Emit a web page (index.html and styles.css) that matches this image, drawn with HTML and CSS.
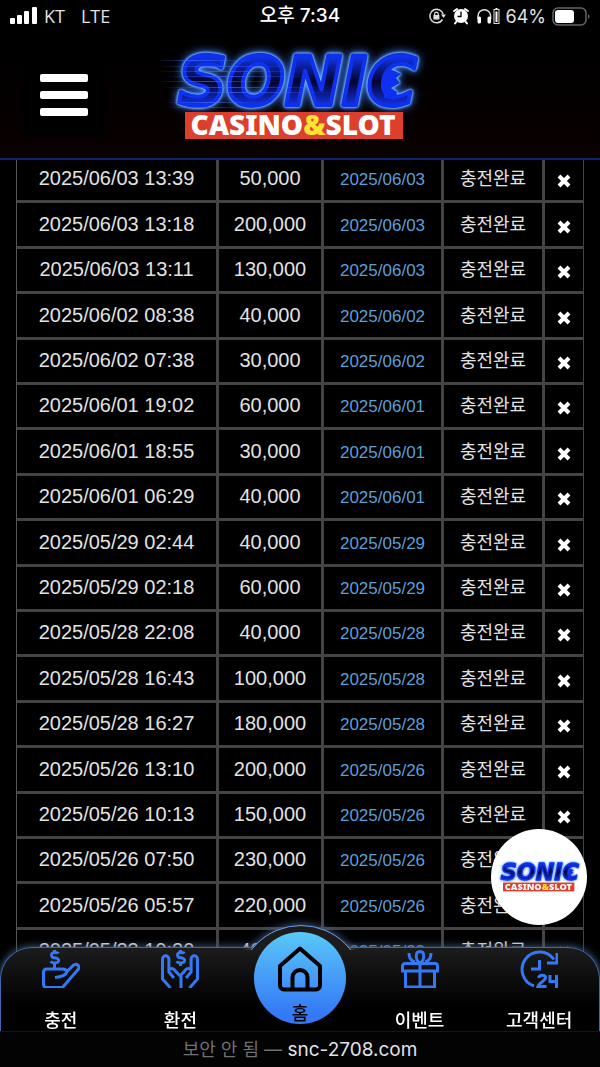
FILE: index.html
```html
<!DOCTYPE html>
<html lang="ko">
<head>
  <meta charset="UTF-8" />
  <meta name="viewport" content="width=device-width, initial-scale=1.0"/>
  <title>SONIC CASINO&amp;SLOT</title>
  <link rel="stylesheet" href="styles.css">
</head>
<body>

<!-- Shared shapes -->
<svg class="sprite" aria-hidden="true">
  <defs>
    <linearGradient id="letter-fill" x1="0" y1="0" x2="0" y2="1">
      <stop offset="0.15" stop-color="#1238ff"/>
      <stop offset="0.5" stop-color="#04042c"/>
      <stop offset="0.85" stop-color="#1238ff"/>
    </linearGradient>
    <linearGradient id="speed" x1="0" x2="1">
      <stop offset="0" stop-color="#3a68ff" stop-opacity="0"/>
      <stop offset="0.4" stop-color="#3a68ff" stop-opacity="0.7"/>
      <stop offset="1" stop-color="#3a68ff" stop-opacity="0"/>
    </linearGradient>
  </defs>
  <symbol id="icon-x" viewBox="0 0 14 14">
    <path d="M2 2l10 10M12 2L2 12" fill="none" stroke="currentColor" stroke-width="4"/>
  </symbol>
  <symbol id="speed-lines" viewBox="0 0 290 110">
    <g fill="url(#speed)">
      <rect x="6" y="20" width="100" height="1"/>
      <rect x="10" y="26" width="130" height="1"/>
      <rect x="6" y="31" width="150" height="1"/>
      <rect x="12" y="36" width="150" height="1"/>
      <rect x="6" y="41" width="130" height="1"/>
      <rect x="14" y="47" width="160" height="1"/>
      <rect x="20" y="52" width="170" height="1"/>
      <rect x="15" y="62" width="100" height="1"/>
      <rect x="17" y="67" width="80" height="1"/>
    </g>
  </symbol>
</svg>

<header class="top">
  <!-- Phone status bar -->
  <div class="status">
    <div class="status-left">
      <svg width="28" height="18" viewBox="0 0 28 18" fill="#fff">
        <rect x="0" y="11" width="5" height="6" rx="1"/>
        <rect x="7" y="8" width="5" height="9" rx="1"/>
        <rect x="14" y="4" width="5" height="13" rx="1"/>
        <rect x="22" y="0" width="5" height="17" rx="1"/>
      </svg>
      <span>KT</span>
      <span class="network">LTE</span>
    </div>
    <div class="clock">오후 7:34</div>
    <div class="status-right">
      <svg width="18" height="18" viewBox="0 0 18 18" fill="none" stroke="#ddd" stroke-width="1.5">
        <path d="M14.5 12.5A6.8 6.8 0 1 1 15.3 7.5"/>
        <path d="M13 7.5h5l-2.5 3.5z" fill="#ddd" stroke="none"/>
        <rect x="5.4" y="8" width="6" height="4.5" fill="#ddd" stroke="none"/>
        <path d="M6.6 8.5V7a1.8 1.8 0 0 1 3.6 0v1.5" stroke-width="1.2"/>
      </svg>
      <svg width="18" height="18" viewBox="0 0 18 18">
        <circle cx="9" cy="9" r="7" fill="#fff"/>
        <path d="M2 4L5 2M16 4L13 2M4.500 14.500L3 16.500M13.500 14.500L15 16.500" stroke="#fff" stroke-width="2" stroke-linecap="round"/>
        <path d="M9 4.500V9.500H5.500" fill="none" stroke="#000" stroke-width="1.3"/>
      </svg>
      <svg width="24" height="18" viewBox="0 0 24 18">
        <path d="M2 12V9a6.300 6.300 0 0 1 12.600 0v3" fill="none" stroke="#ddd" stroke-width="1.5"/>
        <rect x="1.5" y="9.5" width="3.5" height="7" rx="1.5" fill="#fff"/>
        <rect x="11.5" y="9.5" width="3.5" height="7" rx="1.5" fill="#fff"/>
        <rect x="18" y="2.5" width="5" height="14" fill="none" stroke="#ddd"/>
        <path d="M19.500 4.500h2v10.500h-2zM19.500 1h2v1h-2z" fill="#fff"/>
      </svg>
      <span>64%</span>
      <svg class="battery" width="38" height="19" viewBox="0 0 38 19">
        <rect x="1" y="1" width="33" height="17" rx="5" fill="none" stroke="#666" stroke-width="1.5"/>
        <rect x="3" y="3" width="19" height="13" rx="3" fill="#fff"/>
        <path d="M36 7c2 1 2 4 0 5z" fill="#666"/>
      </svg>
    </div>
  </div>

  <!-- Site header -->
  <div class="site-header">
    <button class="menu-toggle" aria-label="메뉴"><i></i><i></i><i></i></button>
    <a class="brand" href="#">
      <svg class="logo" viewBox="0 0 290 110">
        <g class="logo-name">
          <text x="28" y="65">SONIC</text>
          <path d="M240 29L251 34L246 38L250 43L241 48L247 52L246 60L234 58L234 36z"/>
        </g>
        <use href="#speed-lines" width="290" height="110"/>
        <rect x="35" y="72" width="218" height="27" fill="#dc3f2b"/>
        <text class="logo-sub" x="143" y="95">CASINO<tspan fill="#ffe234">&amp;</tspan>SLOT</text>
      </svg>
    </a>
  </div>
</header>

<main>
  <table class="history">
    <colgroup><col><col class="c-amount"><col class="c-date"><col class="c-state"><col class="c-del"></colgroup>
    <tbody>
      <tr><td>2025/06/03 13:39</td><td>50,000</td><td>2025/06/03</td><td>충전완료</td><td><button aria-label="삭제"><svg><use href="#icon-x"/></svg></button></td></tr>
      <tr><td>2025/06/03 13:18</td><td>200,000</td><td>2025/06/03</td><td>충전완료</td><td><button aria-label="삭제"><svg><use href="#icon-x"/></svg></button></td></tr>
      <tr><td>2025/06/03 13:11</td><td>130,000</td><td>2025/06/03</td><td>충전완료</td><td><button aria-label="삭제"><svg><use href="#icon-x"/></svg></button></td></tr>
      <tr><td>2025/06/02 08:38</td><td>40,000</td><td>2025/06/02</td><td>충전완료</td><td><button aria-label="삭제"><svg><use href="#icon-x"/></svg></button></td></tr>
      <tr><td>2025/06/02 07:38</td><td>30,000</td><td>2025/06/02</td><td>충전완료</td><td><button aria-label="삭제"><svg><use href="#icon-x"/></svg></button></td></tr>
      <tr><td>2025/06/01 19:02</td><td>60,000</td><td>2025/06/01</td><td>충전완료</td><td><button aria-label="삭제"><svg><use href="#icon-x"/></svg></button></td></tr>
      <tr><td>2025/06/01 18:55</td><td>30,000</td><td>2025/06/01</td><td>충전완료</td><td><button aria-label="삭제"><svg><use href="#icon-x"/></svg></button></td></tr>
      <tr><td>2025/06/01 06:29</td><td>40,000</td><td>2025/06/01</td><td>충전완료</td><td><button aria-label="삭제"><svg><use href="#icon-x"/></svg></button></td></tr>
      <tr><td>2025/05/29 02:44</td><td>40,000</td><td>2025/05/29</td><td>충전완료</td><td><button aria-label="삭제"><svg><use href="#icon-x"/></svg></button></td></tr>
      <tr><td>2025/05/29 02:18</td><td>60,000</td><td>2025/05/29</td><td>충전완료</td><td><button aria-label="삭제"><svg><use href="#icon-x"/></svg></button></td></tr>
      <tr><td>2025/05/28 22:08</td><td>40,000</td><td>2025/05/28</td><td>충전완료</td><td><button aria-label="삭제"><svg><use href="#icon-x"/></svg></button></td></tr>
      <tr><td>2025/05/28 16:43</td><td>100,000</td><td>2025/05/28</td><td>충전완료</td><td><button aria-label="삭제"><svg><use href="#icon-x"/></svg></button></td></tr>
      <tr><td>2025/05/28 16:27</td><td>180,000</td><td>2025/05/28</td><td>충전완료</td><td><button aria-label="삭제"><svg><use href="#icon-x"/></svg></button></td></tr>
      <tr><td>2025/05/26 13:10</td><td>200,000</td><td>2025/05/26</td><td>충전완료</td><td><button aria-label="삭제"><svg><use href="#icon-x"/></svg></button></td></tr>
      <tr><td>2025/05/26 10:13</td><td>150,000</td><td>2025/05/26</td><td>충전완료</td><td><button aria-label="삭제"><svg><use href="#icon-x"/></svg></button></td></tr>
      <tr><td>2025/05/26 07:50</td><td>230,000</td><td>2025/05/26</td><td>충전완료</td><td><button aria-label="삭제"><svg><use href="#icon-x"/></svg></button></td></tr>
      <tr><td>2025/05/26 05:57</td><td>220,000</td><td>2025/05/26</td><td>충전완료</td><td><button aria-label="삭제"><svg><use href="#icon-x"/></svg></button></td></tr>
      <tr><td>2025/05/23 19:20</td><td>40,000</td><td>2025/05/23</td><td>충전완료</td><td><button aria-label="삭제"><svg><use href="#icon-x"/></svg></button></td></tr>
    </tbody>
  </table>
</main>

<a class="floating" href="#">
  <svg viewBox="0 0 290 110">
    <g class="logo-name">
      <text x="28" y="65">SONIC</text>
      <path d="M240 29L251 34L246 38L250 43L241 48L247 52L246 60L234 58L234 36z"/>
    </g>
    <use href="#speed-lines" width="290" height="110"/>
    <rect x="35" y="72" width="218" height="27" fill="#dc3f2b"/>
    <text class="logo-sub" x="143" y="95">CASINO<tspan fill="#ffe234">&amp;</tspan>SLOT</text>
  </svg>
</a>

<footer class="bottom">
  <nav class="tabs">
    <a href="#">
      <svg viewBox="0 0 38 38">
        <path d="M16.500 3.500c-1-1.500-6.500-1.500-7 1-.5 2 1 3 3.200 3.300 2.600.4 4.600 1.400 3.800 3.500-.9 2.200-6.500 2-8 0M12.500 0v2.500M12.500 13v6"/>
        <path d="M20 19H4.500A3 3 0 0 0 1.500 22v12.500a3 3 0 0 0 3 3H20.500L36 19.500a3 3 0 0 0-4.500-4.300L25 21.500C24 25 20 27 13 27.500M20 19c3.500 0 5 1.500 5 3"/>
      </svg>
      <span>충전</span>
    </a>
    <a href="#">
      <svg viewBox="0 0 38 38">
        <path d="M23.500 3.500c-1-1.500-6.500-1.500-7 1-.5 2 1 3 3.200 3.300 2.600.4 4.600 1.400 3.800 3.500-.9 2.200-6.500 2-8 0M19.500 0v2.500M19.500 13v3"/>
        <path d="M9.500 38L1.500 29V9a3.200 3.200 0 0 1 6.400 0v13l5 6M7.900 20c3-3 5-1 6.500 1l5.600 6M28.500 38l8-9V9a3.200 3.200 0 0 0-6.400 0v13l-5 6M30.100 20c-3-3-5-1-6.500 1L20 25v13"/>
      </svg>
      <span>환전</span>
    </a>
    <a class="home" href="#">
      <svg viewBox="0 0 46 46">
        <path d="M23 2.500L3 20v19.500a4 4 0 0 0 4 4h32a4 4 0 0 0 4-4V20zM15.500 43V31.500a7.500 7.500 0 0 1 15 0V43"/>
      </svg>
      <span>홈</span>
    </a>
    <a href="#">
      <svg viewBox="0 0 38 38">
        <path d="M1.500 21v-5a2.500 2.500 0 0 1 2.500-2.500h30a2.500 2.500 0 0 1 2.500 2.500v5zM4.500 21v16h29V21M19 13.500V37"/>
        <path d="M19 13.500c-5-4-5-12 0-12s5 8 0 12zM8 3c0 5 2 8 6 9M30 3c0 5-2 8-6 9"/>
      </svg>
      <span>이벤트</span>
    </a>
    <a href="#">
      <svg viewBox="0 0 38 38">
        <path d="M14 36A17.500 17.500 0 1 1 34 9.500M37 3v10H27M19.500 10v9H11"/>
        <path d="M18.500 28c1-4 7.500-3.500 7 0-.3 2.500-6.500 5-7.500 8.500h8.500M30 25v6.500h7M36.500 25v13"/>
      </svg>
      <span>고객센터</span>
    </a>
  </nav>
  <div class="address"><span>보안 안 됨 —</span> snc-2708.com</div>
</footer>

</body>
</html>
```
FILE: styles.css
```css
* {
  margin: 0;
  padding: 0;
  box-sizing: border-box;
}

body {
  font-family: "Liberation Sans", "Noto Sans CJK KR", sans-serif;
  background-color: #000;
  color: #e2e2e2;
}

a {
  color: inherit;
  text-decoration: none;
}

button {
  border: none;
  background: none;
  color: inherit;
  cursor: pointer;
}

svg {
  display: block;
}

.sprite {
  position: absolute;
  width: 0;
  height: 0;
}

/* Header */
.top {
  position: sticky;
  top: 0;
  z-index: 10;
  background: linear-gradient(#000 30%, #0a0000);
  box-shadow: 0 1px 0 #0c2474, 0 2px 0 #13235c;
}

.status {
  display: grid;
  grid-template-columns: 1fr auto 1fr;
  align-items: center;
  height: 32px;
  padding: 0 10px;
  font-family: Inter, "Noto Sans CJK KR", sans-serif;
  font-size: 18px;
}

.status-left,
.status-right {
  display: flex;
  align-items: center;
  gap: 6px;
}

.status-left span {
  font-family: "Open Sans", sans-serif;
}

.status-left .network {
  margin-left: 10px;
}

.status-right {
  justify-content: flex-end;
}

.clock {
  font-size: 19px;
  line-height: 28px;
  font-weight: 500;
  color: #fff;
}

.site-header {
  display: grid;
  grid-template-columns: 80px 290px;
  column-gap: 46px;
  height: 126px;
  padding: 8px 24px 0;
}

.menu-toggle {
  display: flex;
  flex-direction: column;
  justify-content: center;
  gap: 9px;
  height: 96px;
  padding: 14px 16px 0;
  background-color: #000;
}

.menu-toggle i {
  height: 8px;
  border-radius: 2px;
  background-color: #fff;
}

/* Logo */
.logo {
  width: 290px;
  height: 110px;
}

.logo-name {
  font-family: "DejaVu Sans", sans-serif;
  font-size: 68px;
  font-weight: bold;
  font-style: italic;
  fill: url(#letter-fill);
  stroke: #1030f0;
  stroke-width: 4px;
  stroke-linejoin: round;
  filter: drop-shadow(0 0 1px #7cc8ff) drop-shadow(0 0 1px #6cb4ff) drop-shadow(0 0 4px #3f7cff);
}

.logo-name path {
  fill: #1030f0;
  stroke: none;
}

.logo-sub {
  font-family: "Noto Sans", sans-serif;
  font-size: 28px;
  font-weight: 900;
  text-anchor: middle;
  fill: #fff;
}

/* History table */
main {
  padding: 0 16px;
}

.history {
  width: 100%;
  table-layout: fixed;
  border-spacing: 0;
  border-left: 1px solid #555;
  text-align: center;
  font-size: 20px;
}

.c-amount { width: 105px; }
.c-date { width: 120px; }
.c-state { width: 101px; }
.c-del { width: 39px; }

.history tr {
  height: 45px;
}

.history tr:nth-child(5n + 2),
.history tr:nth-child(5n + 4) {
  height: 46px;
}

.history td {
  border-right: 3px solid #444;
  border-bottom: 3px solid #444;
  line-height: 24px;
  padding-bottom: 2px;
  white-space: nowrap;
}

.history td:nth-child(3) {
  padding: 2px 0 0;
  font-size: 17px;
  color: #5a9fd8;
}

.history td:nth-child(4) {
  padding-bottom: 0;
  font-size: 18px;
}

.history td:last-child {
  border-right-width: 1px;
  padding: 4px 0 0;
}

.history button {
  display: block;
  margin: 0 auto;
  color: #fff;
}

.history button svg {
  width: 14px;
  height: 14px;
}

/* Floating logo */
.floating {
  position: fixed;
  right: 13px;
  bottom: 142px;
  z-index: 5;
  display: flex;
  align-items: center;
  justify-content: center;
  width: 96px;
  height: 96px;
  border-radius: 50%;
  background-color: #fff;
}

.floating svg {
  width: 96px;
  height: 36px;
}

/* Bottom bar */
.bottom {
  position: fixed;
  left: 0;
  right: 0;
  bottom: 0;
  z-index: 8;
}

.tabs {
  position: relative;
  display: grid;
  grid-template-columns: repeat(5, 1fr);
  grid-template-rows: 100%;
  height: 84px;
  border: 1px solid #3e68b4;
  border-bottom: none;
  border-radius: 32px 32px 0 0;
  background: linear-gradient(#1c1c1c, #000 70%);
  box-shadow: 0 0 8px #49658f;
}

/* raised arc behind the home button */
.tabs::before {
  content: "";
  position: absolute;
  left: 50%;
  top: -23px;
  width: 124px;
  height: 124px;
  margin-left: -62px;
  border: 1px solid #6a9be8;
  border-radius: 50%;
  background-color: #1c1c1c;
  box-shadow: 0 0 8px #49658f;
  clip-path: inset(-16px -4px 101px -4px);
}

.tabs a {
  display: flex;
  flex-direction: column;
  align-items: center;
  justify-content: space-between;
  padding-top: 2px;
  color: #fff;
  font-size: 18px;
  font-weight: 500;
  line-height: 24px;
}

.tabs span {
  font-family: "Noto Sans CJK KR", sans-serif;
}

.tabs svg {
  width: 38px;
  height: 38px;
  fill: none;
  stroke: #3478f6;
  stroke-width: 3;
}

.tabs .home {
  position: relative;
  align-self: end;
  justify-self: center;
  width: 92px;
  height: 92px;
  margin-bottom: 7px;
  padding-top: 14px;
  border-radius: 50%;
  background: linear-gradient(#5ac8f8, #3478f6 90%);
  color: #000;
}

.tabs .home svg {
  width: 46px;
  height: 46px;
  stroke: #000;
  stroke-width: 4;
  stroke-linejoin: round;
}

.address {
  position: relative;
  height: 36px;
  border-top: 1px solid #161616;
  background-color: #030303;
  text-align: center;
  font-family: Inter, "Noto Sans CJK KR", sans-serif;
  font-size: 19px;
  line-height: 36px;
}

.address span {
  font-size: 18px;
  color: #707070;
}
```
